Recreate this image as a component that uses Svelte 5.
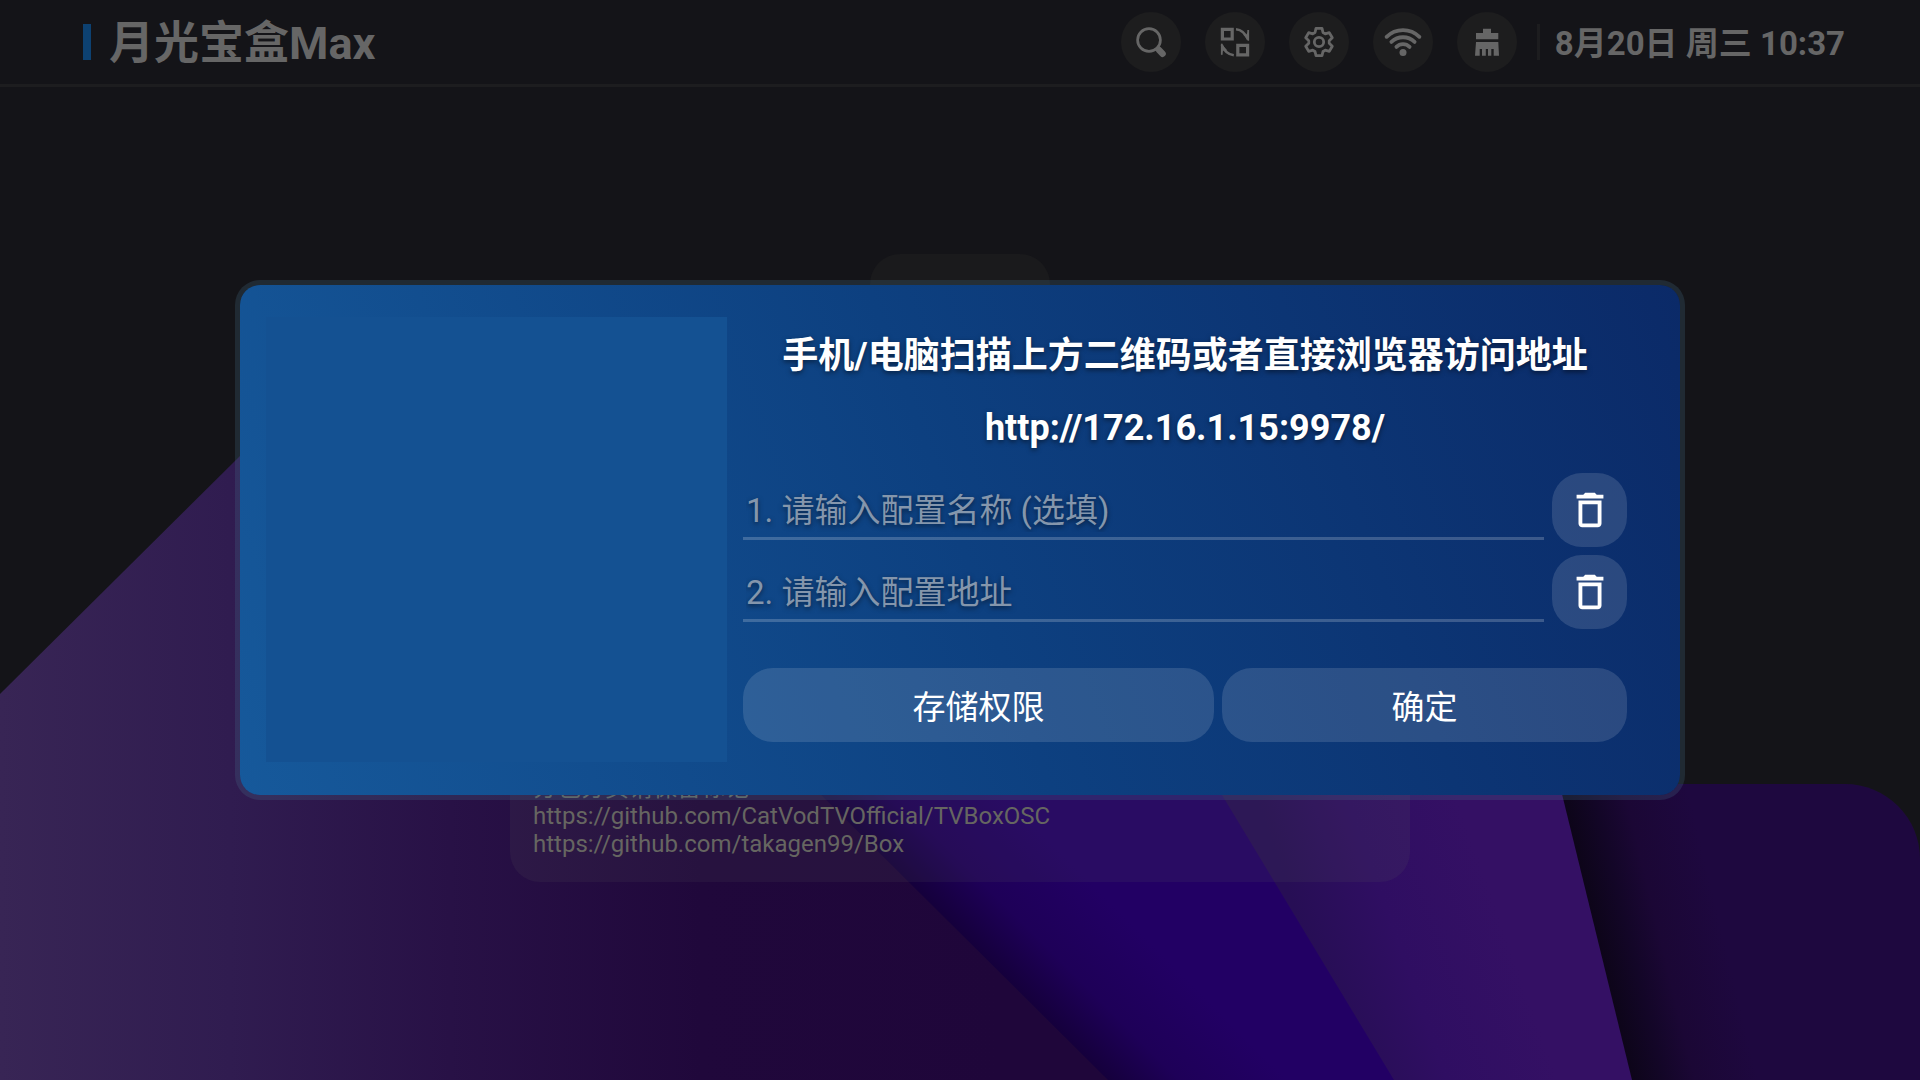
<script>
    let configName = $state('');
    let configUrl = $state('');

    const serverUrl = 'http://172.16.1.15:9978/';

    const sources = [
        'https://github.com/CatVodTVOfficial/TVBoxOSC',
        'https://github.com/takagen99/Box'
    ];

    // one tooth of the settings gear, turned six times round the centre
    const tooth = [[-4, -9.5], [-3, -13.6], [3, -13.6], [4, -9.5]];
    const gear = [0, 1, 2, 3, 4, 5]
        .flatMap((i) => {
            const a = (i * Math.PI) / 3;
            return tooth.map(([x, y]) => [
                30 + x * Math.cos(a) - y * Math.sin(a),
                30 + x * Math.sin(a) + y * Math.cos(a)
            ]);
        })
        .map((p) => p.map((n) => n.toFixed(2)).join(','))
        .join(' ');
</script>

{#snippet trash()}
    <svg viewBox="0 0 24 24" width="46" height="46" aria-hidden="true">
        <path fill="#fff" d="M6 19c0 1.1.9 2 2 2h8c1.1 0 2-.9 2-2V7H6v12zM8 9h8v10H8V9zm7.5-5l-1-1h-5l-1 1H5v2h14V4h-3.5z" />
    </svg>
{/snippet}

<div class="page">
    <svg class="wallpaper" viewBox="0 0 1920 1080" preserveAspectRatio="none" aria-hidden="true">
        <defs>
            <linearGradient id="left" gradientUnits="userSpaceOnUse" x1="0" y1="0" x2="1000" y2="0">
                <stop offset="0" stop-color="#382555" />
                <stop offset=".23" stop-color="#301c50" />
                <stop offset=".45" stop-color="#281146" />
                <stop offset=".7" stop-color="#20083b" />
                <stop offset="1" stop-color="#1f063a" />
            </linearGradient>
            <linearGradient id="blue" gradientUnits="userSpaceOnUse" x1="966" y1="938" x2="1056" y2="848">
                <stop offset="0" stop-color="#15003c" />
                <stop offset=".4" stop-color="#1e0058" />
                <stop offset="1" stop-color="#220064" />
            </linearGradient>
            <linearGradient id="violet" gradientUnits="userSpaceOnUse" x1="1300" y1="924" x2="1480" y2="860">
                <stop offset="0" stop-color="#270e55" />
                <stop offset=".45" stop-color="#2f0e62" />
                <stop offset="1" stop-color="#341064" />
            </linearGradient>
            <linearGradient id="right" gradientUnits="userSpaceOnUse" x1="1597" y1="938" x2="1717" y2="909">
                <stop offset="0" stop-color="#0d0519" />
                <stop offset=".25" stop-color="#130627" />
                <stop offset=".5" stop-color="#1b0735" />
                <stop offset="1" stop-color="#1e083f" />
            </linearGradient>
        </defs>
        <path fill="url(#right)" d="M1400 784H1845A75 75 0 0 1 1920 859V1080H1400z" />
        <path fill="url(#violet)" d="M1000 500H1490L1632 1080H1000z" />
        <path fill="url(#blue)" d="M700 500H1044L1394 1080H700z" />
        <path fill="url(#left)" d="M0 694L240 456L480 456L1108 1080H0z" />
    </svg>

    <header>
        <h1><span>月光宝盒Max</span></h1>
        <nav>
            <button aria-label="搜索">
                <svg viewBox="0 0 60 60">
                    <circle cx="28" cy="28" r="11.4" fill="none" stroke="#666" stroke-width="2.7" />
                    <path d="M36 36l2 2" stroke="#666" stroke-width="3.4" />
                    <path d="M38 38l3.6 3.8" stroke="#666" stroke-width="6.4" stroke-linecap="round" />
                </svg>
            </button>
            <button aria-label="切换">
                <svg viewBox="0 0 60 60" fill="none" stroke="#666" stroke-width="3.2">
                    <path d="M17.4 17.4h9.8v9.6h-9.8zM32.8 33.4h9.8v9.4h-9.8z" />
                    <path d="M31 17.2C36 17.6 40 20.5 43 27.5M16.8 33C19 39 22.5 42.3 28.8 43.2" stroke-width="2.4" />
                    <path d="M43.9 18V29L38 22.4 41.4 22.6zM16.1 31.6V43.4L18 38.4 22.4 38.6z" fill="#666" stroke="none" />
                    <path d="M43.2 18v10.6M16.8 31.8v11" stroke-width="1.8" />
                </svg>
            </button>
            <button aria-label="设置">
                <svg viewBox="0 0 60 60" fill="none" stroke="#666" stroke-width="2.8">
                    <polygon points={gear} stroke-linejoin="round" />
                    <circle cx="30" cy="30" r="4.7" />
                </svg>
            </button>
            <button aria-label="网络">
                <svg viewBox="0 0 60 60" fill="none" stroke="#666" stroke-width="3.8" stroke-linecap="round">
                    <path d="M13.6 24.8a23.4 23.4 0 0 1 32.8 0M18.4 29.9a16.8 16.8 0 0 1 23.2 0M23.4 34.9a9.2 9.2 0 0 1 13.2 0" />
                    <circle cx="30" cy="40.4" r="3.5" fill="#666" stroke="none" />
                </svg>
            </button>
            <button aria-label="清理缓存">
                <svg viewBox="0 0 60 60" fill="#666">
                    <path d="M26 16.7h8V21h7.3v6.3H19V21h7z" />
                    <path d="M19 30h22.3l.7 13.7h-5.3V37h-2.4v6.7H31V37h-2.2v6.7H25V37h-2.3v6.7H18z" />
                </svg>
            </button>
            <time datetime="08-20T10:37"><span>8月20日 周三 10:37</span></time>
        </nav>
    </header>

    <main>
        <div class="tile"></div>
        <section class="about">
            <span>分包分页请保留标记</span>
            {#each sources as source}
                <a href={source}>{source}</a>
            {/each}
        </section>
    </main>

    <div class="backdrop">
        <div class="dialog" role="dialog" aria-modal="true" aria-labelledby="hint">
            <div class="qr"></div>
            <form onsubmit={(e) => e.preventDefault()}>
                <h2 id="hint">手机/电脑扫描上方二维码或者直接浏览器访问地址</h2>
                <p>{serverUrl}</p>
                <div class="row">
                    <input type="text" aria-label="配置名称" placeholder="1. 请输入配置名称 (选填)" bind:value={configName} />
                    <button type="button" class="clear" aria-label="清除名称" onclick={() => (configName = '')}>
                        {@render trash()}
                    </button>
                </div>
                <div class="row">
                    <input type="text" aria-label="配置地址" placeholder="2. 请输入配置地址" bind:value={configUrl} />
                    <button type="button" class="clear" aria-label="清除地址" onclick={() => (configUrl = '')}>
                        {@render trash()}
                    </button>
                </div>
                <div class="row actions">
                    <button type="button" class="storage">存储权限</button>
                    <button type="submit" class="confirm">确定</button>
                </div>
            </form>
        </div>
    </div>
</div>

<style>
    :global(body) {
        margin: 0;
        background: #141418;
    }

    .page {
        position: relative;
        display: flex;
        flex-direction: column;
        min-height: 100vh;
        overflow: hidden;
        color: #666;
        font-family: Roboto, "Noto Sans CJK SC", sans-serif;
    }

    .page * {
        box-sizing: border-box;
    }

    .wallpaper {
        position: absolute;
        inset: 0;
        width: 100%;
        height: 100%;
    }

    button {
        padding: 0;
        border: none;
        color: inherit;
        font-family: inherit;
        cursor: pointer;
    }

    header {
        position: relative;
        display: flex;
        align-items: center;
        justify-content: space-between;
        height: 87px;
        padding: 0 75px 0 83px;
        border-bottom: 3px solid #1d1d1f;
    }

    h1 {
        display: flex;
        align-items: center;
        gap: 18px;
        margin: 0;
        font-size: 45px;
        font-weight: 700;
        line-height: 60px;
    }

    h1::before {
        content: "";
        width: 8px;
        height: 36px;
        background: #0d4171;
    }

    h1 span,
    time span {
        padding-top: 4px;
    }

    nav {
        display: flex;
        align-items: center;
        gap: 24px;
    }

    nav button {
        width: 60px;
        height: 60px;
        border-radius: 50%;
        background: #1d1d1e;
    }

    nav svg {
        display: block;
    }

    time {
        display: flex;
        align-items: center;
        gap: 15px;
        margin-left: -4px;
        font-size: 33px;
        font-weight: 700;
        line-height: 40px;
        white-space: nowrap;
    }

    time::before {
        content: "";
        width: 3px;
        height: 36px;
        background: #1d1d1f;
    }

    main {
        position: relative;
        display: flex;
        flex-direction: column;
        align-items: center;
        gap: 24px;
        padding-top: 167px;
    }

    .tile {
        width: 180px;
        height: 180px;
        border-radius: 30px;
        background: #1a1a1c;
    }

    .about {
        display: flex;
        flex-direction: column;
        align-items: flex-start;
        justify-content: flex-end;
        width: 900px;
        max-width: 90%;
        min-height: 424px;
        padding: 24px 23px;
        border-radius: 30px;
        background: rgba(90, 90, 90, 0.13);
        color: #666661;
        font-size: 24px;
        line-height: 28px;
    }

    .about a {
        color: inherit;
        text-decoration: none;
    }

    .backdrop {
        position: absolute;
        inset: 0;
        display: flex;
        align-items: center;
        justify-content: center;
    }

    .dialog {
        display: flex;
        gap: 16px;
        width: 1450px;
        max-width: 96%;
        padding: 32px 53px 33px 26px;
        border: 5px solid rgba(72, 115, 141, 0.23);
        border-radius: 25px;
        background: linear-gradient(70deg, #16599b, #0d4080 50%, #0b2a68) padding-box;
        color: #fff;
    }

    .qr {
        flex: 0 0 461px;
        min-height: 445px;
        background: #145192;
    }

    form {
        flex: 1;
        display: flex;
        flex-direction: column;
        gap: 8px;
        min-width: 0;
        text-shadow: 0 2px 5px rgba(0, 0, 0, 0.5);
    }

    h2,
    p {
        margin: 0;
        font-size: 36px;
        font-weight: 700;
        line-height: 44px;
        text-align: center;
    }

    h2 {
        margin-top: 17px;
    }

    p {
        margin: 20px 0 15px;
    }

    .row {
        display: flex;
        align-items: center;
        gap: 8px;
    }

    input {
        flex: 1;
        min-width: 0;
        height: 60px;
        padding: 4px 3px 0;
        border: none;
        border-bottom: 3px solid rgba(255, 255, 255, 0.2);
        outline: none;
        background: none;
        color: inherit;
        font-family: inherit;
        font-size: 33px;
        text-shadow: inherit;
    }

    input::placeholder {
        color: #8496ac;
        opacity: 1;
    }

    .row button {
        height: 74px;
        border-radius: 30px;
        background: rgba(255, 255, 255, 0.13);
        font-size: 33px;
    }

    .clear {
        display: flex;
        align-items: center;
        justify-content: center;
        width: 75px;
    }

    .actions {
        margin-top: 31px;
    }

    .actions button {
        text-shadow: none;
    }

    .storage {
        flex: 471;
    }

    .confirm {
        flex: 405;
    }
</style>
